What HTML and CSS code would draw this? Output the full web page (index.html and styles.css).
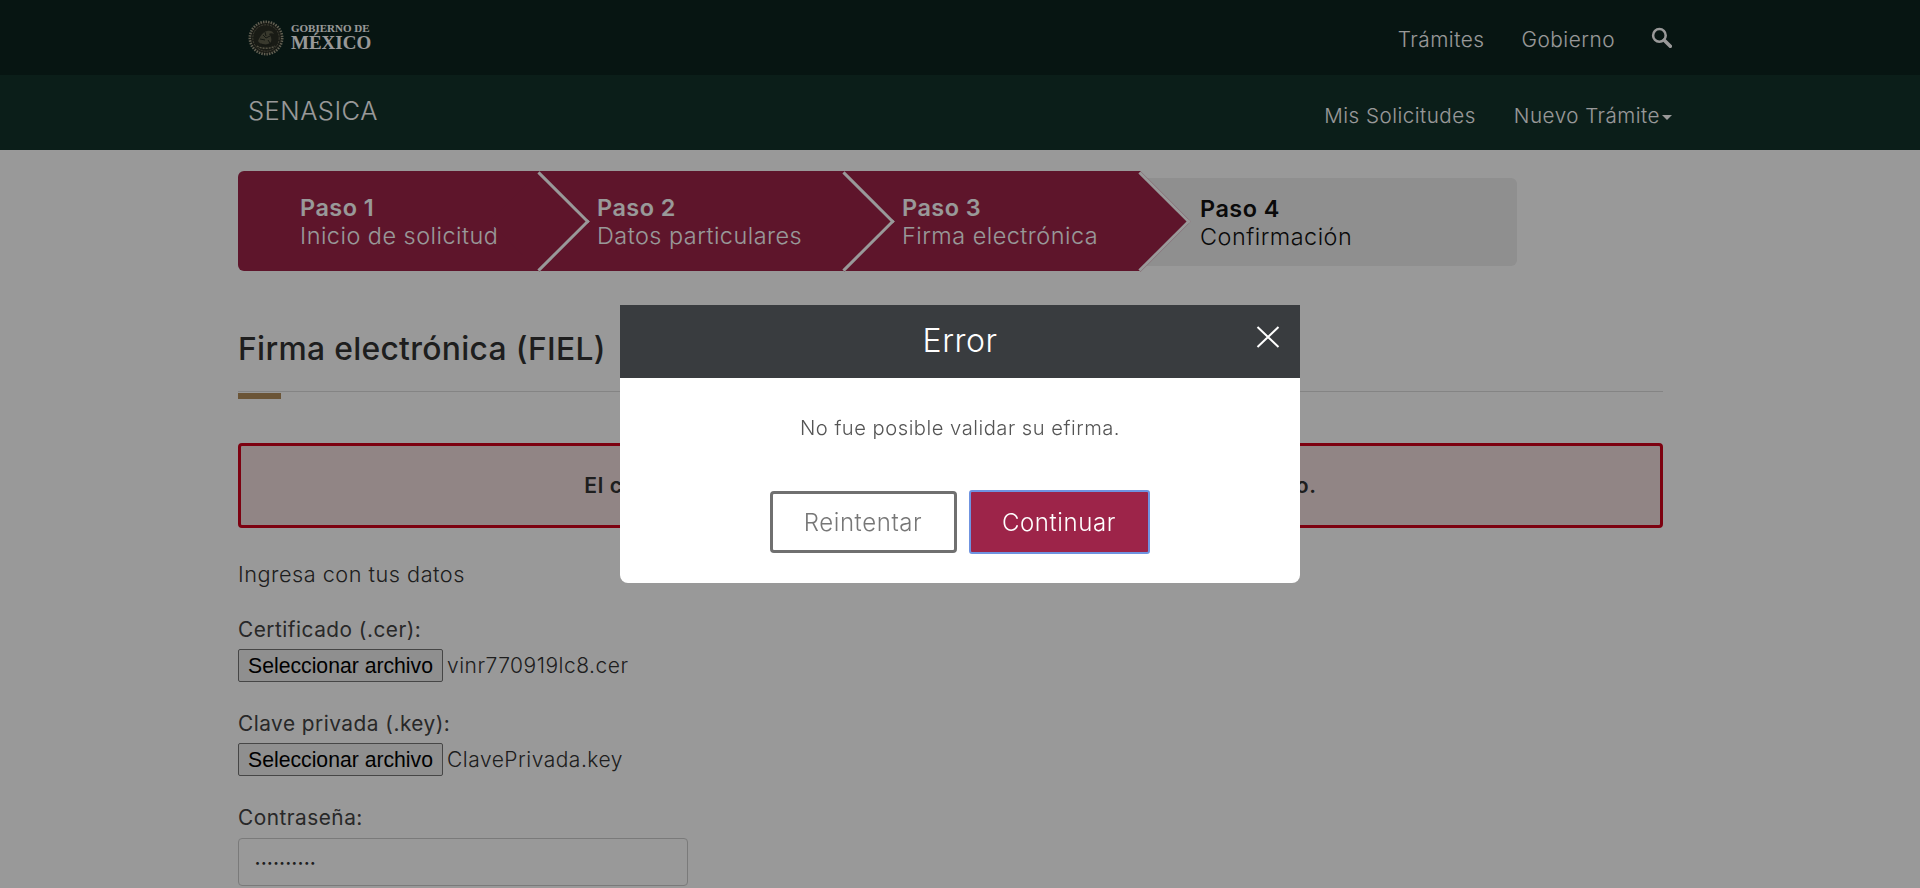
FILE: index.html
```html
<!DOCTYPE html>
<html lang="es">
<head>
  <meta charset="UTF-8">
  <title>Firma electrónica (FIEL) - SENASICA</title>
  <link rel="stylesheet" href="styles.css">
</head>
<body>
<header>
  <div class="top-bar">
    <div class="bar-inner">
      <a class="logo" href="#">
        <svg class="logo-emblem" viewBox="0 0 36 36" width="36" height="36" aria-hidden="true">
          <circle cx="18" cy="18" r="16.4" fill="#2a2d24"/>
          <circle cx="18" cy="18" r="16.2" fill="none" stroke="#a3a08a" stroke-width="2.6" stroke-dasharray="1.4 1.2"/>
          <circle cx="18" cy="18" r="13.2" fill="none" stroke="#6d6c58" stroke-width="1" stroke-dasharray="2 1"/>
          <path d="M10 21c2-5 5-9 9-10 3-1 6 0 7 3-2-1-4-1-5 0 2 2 3 5 2 8-2 2-5 3-8 2-2 0-4-1-5-3z" fill="#5f5f4c"/>
          <path d="M13 24c3 2 8 2 11-1M15 15l3 3 4-2M12 19l5 1M17 12l1 4M20 20l2 3" fill="none" stroke="#23281f" stroke-width="1"/>
          <path d="M9 26c4 3 14 3 18 0" fill="none" stroke="#8d8a72" stroke-width="1.4" stroke-dasharray="2 1"/>
        </svg>
        <span class="logo-text">
          <span class="logo-small">GOBIERNO DE</span>
          <span class="logo-big">MÉXICO</span>
        </span>
      </a>
      <nav class="top-nav">
        <a href="#">Trámites</a>
        <a href="#">Gobierno</a>
        <a href="#" class="search-link" aria-label="Buscar">
          <svg viewBox="0 0 20 20" width="21" height="21" aria-hidden="true">
            <circle cx="8" cy="8" r="6" fill="none" stroke="currentColor" stroke-width="2.4"/>
            <path d="M12.6 12.6L18.4 18.4" stroke="currentColor" stroke-width="3.4" stroke-linecap="round"/>
          </svg>
        </a>
      </nav>
    </div>
  </div>
  <div class="sub-bar">
    <div class="bar-inner">
      <a class="brand" href="#">SENASICA</a>
      <nav class="sub-nav">
        <a href="#">Mis Solicitudes</a>
        <a href="#">Nuevo Trámite<span class="caret"></span></a>
      </nav>
    </div>
  </div>
</header>

<main class="content">
  <div class="stepper">
    <div class="step done"><strong>Paso 1</strong><span>Inicio de solicitud</span></div>
    <div class="step done"><strong>Paso 2</strong><span>Datos particulares</span></div>
    <div class="step done"><strong>Paso 3</strong><span>Firma electrónica</span></div>
    <div class="step pending"><strong>Paso 4</strong><span>Confirmación</span></div>
  </div>

  <h2 class="page-title">Firma electrónica (FIEL)</h2>
  <div class="title-rule"></div>

  <div class="alert">El certificado o la clave privada son incorrectos, inténtalo de nuevo.</div>

  <p class="intro">Ingresa con tus datos</p>

  <div class="field">
    <label>Certificado (.cer):</label>
    <div class="file-row">
      <button type="button" class="file-btn">Seleccionar archivo</button>
      <span class="file-name">vinr770919lc8.cer</span>
    </div>
  </div>
  <div class="field">
    <label>Clave privada (.key):</label>
    <div class="file-row">
      <button type="button" class="file-btn">Seleccionar archivo</button>
      <span class="file-name">ClavePrivada.key</span>
    </div>
  </div>
  <div class="field">
    <label>Contraseña:</label>
    <div class="password">••••••••••</div>
  </div>
</main>

<div class="backdrop">
  <div class="modal">
    <div class="modal-head">
      <h3>Error</h3>
      <button type="button" class="modal-close" aria-label="Cerrar">
        <svg viewBox="0 0 24 22" width="24" height="22" aria-hidden="true">
          <path d="M1.5 1L22.5 21M22.5 1L1.5 21" fill="none" stroke="#fff" stroke-width="2"/>
        </svg>
      </button>
    </div>
    <div class="modal-body">
      <p>No fue posible validar su efirma.</p>
      <div class="modal-actions">
        <button type="button" class="btn btn-outline">Reintentar</button>
        <button type="button" class="btn btn-main">Continuar</button>
      </div>
    </div>
  </div>
</div>
</body>
</html>
```

FILE: styles.css
```css
html {
  overflow: hidden;
}

body {
  margin: 0;
  height: 888px;
  overflow: hidden;
  background: #fff;
  color: #333;
  font-family: 'Inter', 'Open Sans', sans-serif;
  font-size: 20px;
  letter-spacing: 0.025em;
}

a {
  color: inherit;
  text-decoration: none;
}

.bar-inner {
  width: 1424px;
  height: 100%;
  margin: 0 auto;
  display: flex;
  justify-content: space-between;
}

.top-bar {
  height: 75px;
  background: #0c231e;
  color: #fff;
}

.sub-bar {
  height: 75px;
  background: #13322b;
  color: #fff;
}

.logo {
  display: flex;
  align-items: center;
  gap: 7px;
}

.logo-text {
  display: flex;
  flex-direction: column;
  padding-bottom: 2px;
  font-family: 'Liberation Serif', serif;
  font-weight: 700;
  letter-spacing: 0;
}

.logo-small {
  font-size: 11px;
  line-height: 12px;
}

.logo-big {
  font-size: 19px;
  line-height: 17px;
}

.top-nav {
  display: flex;
  align-items: center;
  gap: 37px;
  padding-top: 4px;
  font-size: 20.8px;
  font-weight: 300;
}

.search-link {
  display: flex;
  margin-bottom: 4px;
  margin-left: -1px;
}

.brand {
  font-size: 25.5px;
  font-weight: 300;
  padding-top: 20px;
  line-height: 32px;
}

.sub-nav {
  display: flex;
  gap: 38px;
  padding-top: 23px;
  font-size: 20.6px;
  font-weight: 300;
  line-height: 36px;
}

.caret {
  display: inline-block;
  margin-left: 2px;
  vertical-align: middle;
  border-top: 5px solid #fff;
  border-left: 5px solid transparent;
  border-right: 5px solid transparent;
}

.content {
  width: 1425px;
  margin-left: 238px;
}

/* pasos */
.stepper {
  display: grid;
  grid-template-columns: 302px 305px 296px 376px;
  width: 1279px;
  height: 100px;
  margin-top: 21px;
  font-size: 23.4px;
  line-height: 28px;
}

.step {
  position: relative;
  display: flex;
  flex-direction: column;
  justify-content: center;
  padding-top: 1px;
  padding-left: 57px;
}

.step strong {
  font-weight: 600;
}

.step span {
  font-weight: 300;
}

.step.done {
  background: #9d2449;
  color: #fff;
}

.step.done::after {
  content: "";
  position: absolute;
  top: 14.5px;
  right: -35px;
  width: 71px;
  height: 71px;
  box-sizing: border-box;
  background: #9d2449;
  border-top: 3px solid #fff;
  border-right: 3px solid #fff;
  transform: rotate(45deg);
}

.step:nth-child(1) {
  z-index: 3;
  padding-left: 62px;
  border-radius: 6px 0 0 6px;
}

.step:nth-child(2) {
  z-index: 2;
}

.step:nth-child(3) {
  z-index: 1;
}

.step.pending {
  margin: 7px 0 5px;
  padding-left: 59px;
  background: #eee;
  color: #111;
  border-radius: 0 6px 6px 0;
}

/* titulo */
.page-title {
  margin: 0;
  padding-top: 60px;
  font-size: 31.8px;
  line-height: 36px;
  font-weight: 500;
  letter-spacing: 0.01em;
}

.title-rule {
  position: relative;
  height: 1px;
  margin-top: 24px;
  background: #ddd;
}

.title-rule::after {
  content: "";
  position: absolute;
  left: 0;
  top: 2px;
  width: 43px;
  height: 6px;
  background: #b38e5d;
}

.alert {
  margin-top: 51px;
  height: 85px;
  box-sizing: border-box;
  border: 3px solid #d0021b;
  border-radius: 4px;
  background: #f2dede;
  display: flex;
  align-items: center;
  justify-content: center;
  font-weight: 600;
  font-size: 21.1px;
  letter-spacing: 0.03em;
}

.intro {
  margin: 31px 0 0;
  font-weight: 300;
  font-size: 21.7px;
  line-height: 30px;
}

.field {
  margin-top: 26px;
}

.field + .field {
  margin-top: 27px;
}

.field label {
  display: block;
  line-height: 30px;
  font-weight: 400;
  font-size: 20.8px;
  color: #444;
}

.file-row {
  display: flex;
  align-items: center;
  gap: 4px;
  margin-top: 4px;
}

.file-btn {
  width: 205px;
  height: 33px;
  padding: 0;
  background: #efefef;
  border: 1px solid #767676;
  border-radius: 2px;
  color: #000;
  font-family: 'Liberation Sans', Arial, sans-serif;
  font-size: 21.2px;
  letter-spacing: 0;
}

.file-name {
  font-weight: 300;
  font-size: 21px;
}

.password {
  width: 450px;
  height: 48px;
  margin-top: 5px;
  box-sizing: border-box;
  padding-left: 16px;
  border: 1px solid #ccc;
  border-radius: 4px;
  font-size: 9px;
  line-height: 47px;
  letter-spacing: 0.12em;
  color: #333;
}

/* modal */
.backdrop {
  position: fixed;
  inset: 0;
  z-index: 10;
  background: rgba(0, 0, 0, 0.4);
  display: flex;
  justify-content: center;
  align-items: flex-start;
}

.modal {
  width: 680px;
  margin-top: 305px;
  background: #fff;
  border-radius: 0 0 8px 8px;
  overflow: hidden;
}

.modal-head {
  position: relative;
  height: 73px;
  background: #393c3f;
  color: #fff;
  display: flex;
  align-items: center;
  justify-content: center;
}

.modal-head h3 {
  margin: 0 0 2px;
  font-size: 32px;
  font-weight: 300;
}

.modal-close {
  position: absolute;
  top: 21px;
  right: 20px;
  display: flex;
  padding: 0;
  background: none;
  border: none;
}

.modal-body {
  height: 205px;
  text-align: center;
}

.modal-body p {
  margin: 0;
  padding-top: 35px;
  color: #555;
  font-size: 20.2px;
  font-weight: 300;
  line-height: 30px;
}

.modal-actions {
  display: flex;
  justify-content: center;
  align-items: center;
  gap: 12px;
  margin-top: 47px;
  padding-right: 1px;
}

.btn {
  height: 62px;
  box-sizing: border-box;
  font-family: inherit;
  font-size: 24px;
  font-weight: 300;
  letter-spacing: 0.025em;
}

.btn-outline {
  width: 187px;
  background: #fff;
  border: 3px solid #707070;
  border-radius: 4px;
  color: #777;
}

.btn-main {
  width: 181px;
  height: 64px;
  background: #9d2449;
  border: 2px solid #6f93e0;
  border-radius: 3px;
  color: #fff;
}
```
